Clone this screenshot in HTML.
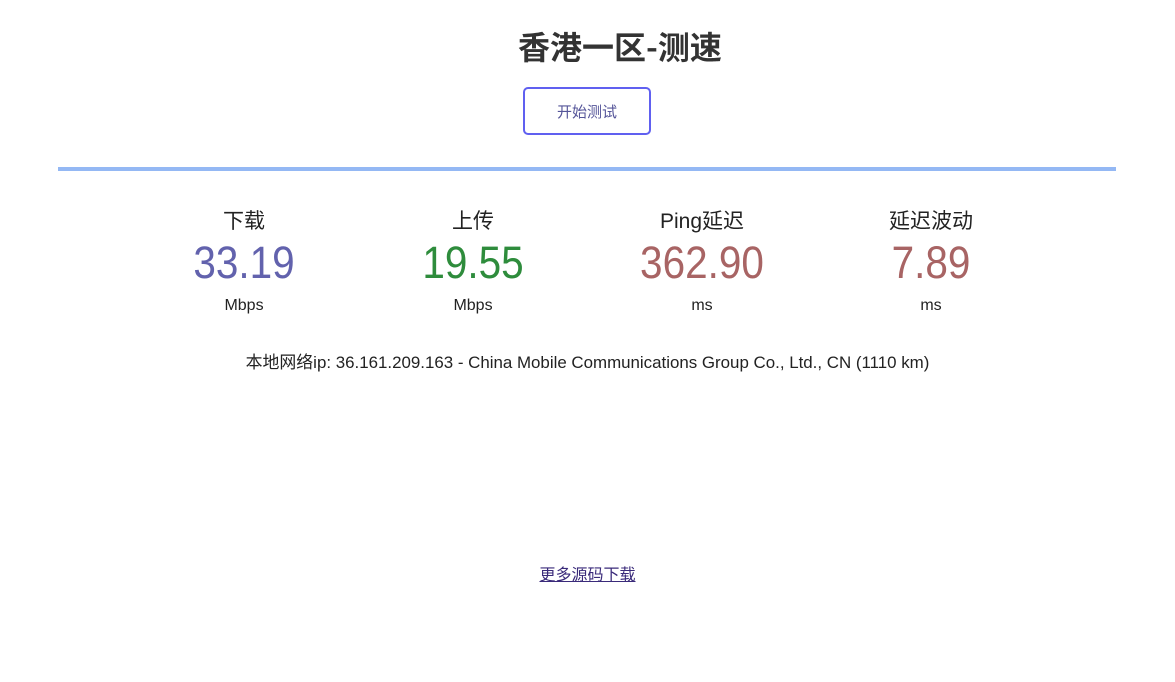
<!DOCTYPE html>
<html><head><meta charset="utf-8"><style>
body{margin:0;width:1175px;height:682px;background:#fff;font-family:"Liberation Sans","Noto Sans CJK SC",sans-serif;color:#222;position:relative;overflow:hidden}
.a{position:absolute;white-space:nowrap}
h1{position:absolute;margin:0;left:518px;top:26px;font-size:32px;font-weight:bold;color:#333;font-family:"Noto Sans CJK SC",sans-serif;line-height:40px}
.btn{position:absolute;left:523px;top:87px;width:124px;height:44px;border:2px solid #6060f0;border-radius:5px;text-align:center;line-height:48px;font-size:15px;color:#555599}
.bar{position:absolute;left:58px;top:167px;width:1058px;height:4px;background:#94b8f4}
.col{position:absolute;width:230px;text-align:center;margin-left:-115px}
.lab{top:207px;font-size:21px;color:#222;line-height:30px}
.num{top:238px;font-size:45px;line-height:50px;transform:scaleX(0.9)}
.unit{top:296px;font-size:16px;line-height:20px}
</style></head><body>
<h1>香港一区-测速</h1>
<div class="btn">开始测试</div>
<div class="bar"></div>
<div class="col lab" style="left:244px">下载</div>
<div class="col lab" style="left:473px">上传</div>
<div class="col lab" style="left:702px">Ping延迟</div>
<div class="col lab" style="left:931px">延迟波动</div>
<div class="col num" style="left:244px;color:#6262ad">33.19</div>
<div class="col num" style="left:473px;color:#2e8c3c">19.55</div>
<div class="col num" style="left:702px;color:#a86464">362.90</div>
<div class="col num" style="left:931px;color:#a86464">7.89</div>
<div class="col unit" style="left:244px">Mbps</div>
<div class="col unit" style="left:473px">Mbps</div>
<div class="col unit" style="left:702px">ms</div>
<div class="col unit" style="left:931px">ms</div>
<div class="a" style="left:0;width:1175px;text-align:center;top:353px;font-size:16.9px;line-height:20px">本地网络ip: 36.161.209.163 - China Mobile Communications Group Co., Ltd., CN (1110 km)</div>
<div class="a" style="left:0;width:1175px;text-align:center;top:566px;font-size:16px;line-height:20px"><a style="color:#3a2a7a;text-decoration:underline">更多源码下载</a></div>
</body></html>
